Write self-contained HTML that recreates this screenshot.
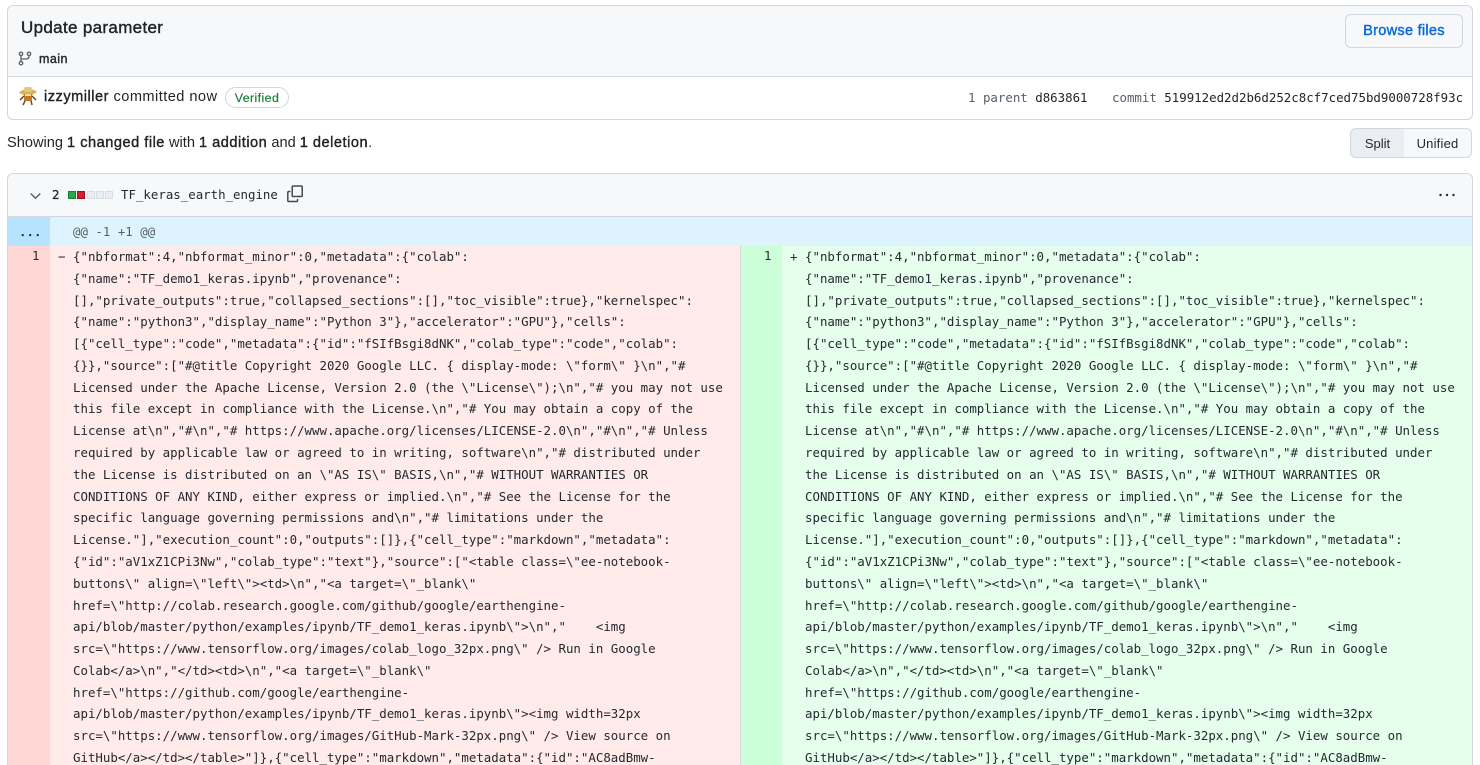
<!DOCTYPE html>
<html><head><meta charset="utf-8"><style>
html,body{margin:0;padding:0;background:#fff;width:1480px;height:765px;overflow:hidden}
body{position:relative;font-family:"Liberation Sans",sans-serif;color:#1f2328}
.a{position:absolute;white-space:pre}
.m{font-family:"DejaVu Sans Mono","Liberation Mono",monospace;font-size:12.42px}
pre{margin:0;position:absolute;font-family:"DejaVu Sans Mono","Liberation Mono",monospace;font-size:12.42px;line-height:21.78px;color:#24292f}
.s{font-weight:400;-webkit-text-stroke:.4px currentColor}
b{font-weight:400;-webkit-text-stroke:.4px currentColor;letter-spacing:.5px}
</style></head><body>
<div class="a" style="left:7px;top:5px;width:1464px;height:113px;border:1px solid #d0d7de;border-radius:6px"></div>
<div class="a" style="left:8px;top:6px;width:1464px;height:70px;background:#f6f8fa;border-bottom:1px solid #d5dbe2;border-radius:6px 6px 0 0"></div>
<div class="a s" style="left:21px;top:18px;font-size:17px;line-height:20px;letter-spacing:.33px;color:#1f2328">Update parameter</div>
<svg class="a" style="left:18px;top:51px" width="14" height="15" viewBox="0 0 14 15" fill="none" stroke="#57606a" stroke-width="1.3"><circle cx="3" cy="2.8" r="1.7"/><circle cx="3" cy="12.2" r="1.7"/><circle cx="11" cy="2.8" r="1.7"/><path d="M3 4.5V10.5M11 4.5V5.5C11 7.5 9.5 8 7.5 8H3"/></svg>
<div class="a s" style="left:39px;top:51px;font-size:12.5px;line-height:16px;letter-spacing:.45px;color:#24292f">main</div>
<div class="a s" style="left:1345px;top:14px;width:116px;height:32px;border:1px solid #d0d7de;border-radius:6px;background:#f6f8fa;text-align:center;line-height:32px;font-size:14.6px;letter-spacing:.25px;color:#0969da">Browse files</div>

<svg class="a" style="left:18px;top:85px" width="20" height="21" viewBox="0 0 20 21"><path d="M1 8C4 3 15 3 19 7L14 10H6Z" fill="#dcb050"/><rect x="6" y="2" width="8" height="5" rx="2" fill="#e3c77e"/><path d="M6 9H14L14 16H6Z" fill="#c67a22"/><path d="M7 9H13V11H7Z" fill="#f0dca8"/><path d="M6 11L2 15M14 11L18 15M7 16L5 20M13 16L14 20" stroke="#6b4a22" stroke-width="1.5" fill="none"/></svg>
<div class="a" style="left:44px;top:88px;font-size:14.6px;line-height:18px;letter-spacing:.45px;color:#1f2328"><b>izzymiller</b> committed now</div>
<div class="a s" style="left:225px;top:87px;width:62px;height:19px;border:1px solid #d0d7de;border-radius:11px;text-align:center;font-size:12.4px;line-height:20px;letter-spacing:.4px;color:#1a7f37;-webkit-text-stroke:.2px #1a7f37">Verified</div>
<div class="a m" style="left:968px;top:90px;line-height:16px;color:#57606a">1 parent <span style="color:#1f2328">d863861</span></div>
<div class="a m" style="left:1112px;top:90px;line-height:16px;color:#57606a">commit <span style="color:#1f2328">519912ed2d2b6d252c8cf7ced75bd9000728f93c</span></div>

<div class="a" style="left:7px;top:134px;font-size:14.6px;line-height:18px;color:#1f2328">Showing <b>1 changed file</b> with <b>1 addition</b> and <b>1 deletion</b>.</div>
<div class="a" style="left:1350px;top:128px;width:53px;height:28px;border:1px solid #d0d7de;border-radius:6px 0 0 6px;background:#eaeef2;text-align:center;font-size:13px;line-height:29px;color:#24292f">Split</div>
<div class="a" style="left:1404px;top:128px;width:67px;height:28px;border:1px solid #d0d7de;border-left:none;border-radius:0 6px 6px 0;background:#f6f8fa;text-align:center;font-size:13px;line-height:29px;letter-spacing:.2px;color:#24292f">Unified</div>

<div class="a" style="left:7px;top:173px;width:1464px;height:620px;border:1px solid #d0d7de;border-radius:6px"></div>
<div class="a" style="left:8px;top:174px;width:1464px;height:42px;background:#f6f8fa;border-bottom:1px solid #d0d7de;border-radius:6px 6px 0 0"></div>
<svg class="a" style="left:30px;top:192px" width="11" height="8" viewBox="0 0 11 8" fill="none" stroke="#57606a" stroke-width="1.4"><path d="M.7 1.5L5.5 6.3L10.3 1.5"/></svg>
<div class="a m" style="left:52px;top:187px;line-height:16px;color:#24292f;-webkit-text-stroke:.3px #24292f">2</div>
<div class="a" style="left:68px;top:191px;width:6px;height:6px;background:#2da44e;border:1px solid #1a7f37"></div>
<div class="a" style="left:77px;top:191px;width:6px;height:6px;background:#cf222e;border:1px solid #a40e26"></div>
<div class="a" style="left:87px;top:191px;width:6px;height:6px;background:#eaeef2;border:1px solid #d8dee4"></div>
<div class="a" style="left:96px;top:191px;width:6px;height:6px;background:#eaeef2;border:1px solid #d8dee4"></div>
<div class="a" style="left:105px;top:191px;width:6px;height:6px;background:#eaeef2;border:1px solid #d8dee4"></div>
<div class="a m" style="left:121px;top:187px;line-height:16px;color:#24292f">TF_keras_earth_engine</div>
<svg class="a" style="left:287px;top:185px" width="16" height="18" viewBox="0 0 16 18" fill="none" stroke="#424a53" stroke-width="1.5"><rect x="5.2" y="1" width="10" height="10.5" rx="1"/><path d="M3.5 6.5H1.8C1.2 6.5 .8 6.9 .8 7.5V15.5C.8 16.1 1.2 16.5 1.8 16.5H9.5C10.1 16.5 10.5 16.1 10.5 15.5V14"/></svg>
<svg class="a" style="left:1439px;top:191px" width="16" height="8" viewBox="0 0 16 8" fill="#24292f"><circle cx="1.5" cy="4" r="1.2"/><circle cx="8" cy="4" r="1.2"/><circle cx="14.5" cy="4" r="1.2"/></svg>

<div class="a" style="left:8px;top:217px;width:42px;height:29px;background:#b6e3ff"></div>
<div class="a" style="left:50px;top:217px;width:1422px;height:29px;background:#ddf4ff"></div>
<div class="a m" style="left:19px;top:224px;line-height:16px;color:#24292f;-webkit-text-stroke:.3px #24292f">...</div>
<div class="a m" style="left:73px;top:224px;line-height:16px;color:#57606a">@@ -1 +1 @@</div>

<div class="a" style="left:8px;top:246px;width:42px;height:530px;background:#ffd7d5"></div>
<div class="a" style="left:50px;top:246px;width:690px;height:530px;background:#ffebe9"></div>
<div class="a" style="left:740px;top:246px;width:1px;height:530px;background:#d0d7de"></div>
<div class="a" style="left:741px;top:246px;width:41px;height:530px;background:#ccffd8"></div>
<div class="a" style="left:782px;top:246px;width:690px;height:530px;background:#e6ffec"></div>

<div class="a m" style="left:32px;top:248px;line-height:16px;color:#24292f">1</div>
<div class="a m" style="left:764px;top:248px;line-height:16px;color:#24292f">1</div>
<div class="a m" style="left:58px;top:249px;line-height:16px;color:#24292f">−</div>
<div class="a m" style="left:790px;top:249px;line-height:16px;color:#24292f">+</div>

<pre style="left:73px;top:246px">{"nbformat":4,"nbformat_minor":0,"metadata":{"colab":
{"name":"TF_demo1_keras.ipynb","provenance":
[],"private_outputs":true,"collapsed_sections":[],"toc_visible":true},"kernelspec":
{"name":"python3","display_name":"Python 3"},"accelerator":"GPU"},"cells":
[{"cell_type":"code","metadata":{"id":"fSIfBsgi8dNK","colab_type":"code","colab":
{}},"source":["#@title Copyright 2020 Google LLC. { display-mode: \"form\" }\n","#
Licensed under the Apache License, Version 2.0 (the \"License\");\n","# you may not use
this file except in compliance with the License.\n","# You may obtain a copy of the
License at\n","#\n","# https://www.apache.org/licenses/LICENSE-2.0\n","#\n","# Unless
required by applicable law or agreed to in writing, software\n","# distributed under
the License is distributed on an \"AS IS\" BASIS,\n","# WITHOUT WARRANTIES OR
CONDITIONS OF ANY KIND, either express or implied.\n","# See the License for the
specific language governing permissions and\n","# limitations under the
License."],"execution_count":0,"outputs":[]},{"cell_type":"markdown","metadata":
{"id":"aV1xZ1CPi3Nw","colab_type":"text"},"source":["&lt;table class=\"ee-notebook-
buttons\" align=\"left\"&gt;&lt;td&gt;\n","&lt;a target=\"_blank\"
href=\"http://colab.research.google.com/github/google/earthengine-
api/blob/master/python/examples/ipynb/TF_demo1_keras.ipynb\"&gt;\n","    &lt;img
src=\"https://www.tensorflow.org/images/colab_logo_32px.png\" /&gt; Run in Google
Colab&lt;/a&gt;\n","&lt;/td&gt;&lt;td&gt;\n","&lt;a target=\"_blank\"
href=\"https://github.com/google/earthengine-
api/blob/master/python/examples/ipynb/TF_demo1_keras.ipynb\"&gt;&lt;img width=32px
src=\"https://www.tensorflow.org/images/GitHub-Mark-32px.png\" /&gt; View source on
GitHub&lt;/a&gt;&lt;/td&gt;&lt;/table&gt;"]},{"cell_type":"markdown","metadata":{"id":"AC8adBmw-</pre>
<pre style="left:805px;top:246px">{"nbformat":4,"nbformat_minor":0,"metadata":{"colab":
{"name":"TF_demo1_keras.ipynb","provenance":
[],"private_outputs":true,"collapsed_sections":[],"toc_visible":true},"kernelspec":
{"name":"python3","display_name":"Python 3"},"accelerator":"GPU"},"cells":
[{"cell_type":"code","metadata":{"id":"fSIfBsgi8dNK","colab_type":"code","colab":
{}},"source":["#@title Copyright 2020 Google LLC. { display-mode: \"form\" }\n","#
Licensed under the Apache License, Version 2.0 (the \"License\");\n","# you may not use
this file except in compliance with the License.\n","# You may obtain a copy of the
License at\n","#\n","# https://www.apache.org/licenses/LICENSE-2.0\n","#\n","# Unless
required by applicable law or agreed to in writing, software\n","# distributed under
the License is distributed on an \"AS IS\" BASIS,\n","# WITHOUT WARRANTIES OR
CONDITIONS OF ANY KIND, either express or implied.\n","# See the License for the
specific language governing permissions and\n","# limitations under the
License."],"execution_count":0,"outputs":[]},{"cell_type":"markdown","metadata":
{"id":"aV1xZ1CPi3Nw","colab_type":"text"},"source":["&lt;table class=\"ee-notebook-
buttons\" align=\"left\"&gt;&lt;td&gt;\n","&lt;a target=\"_blank\"
href=\"http://colab.research.google.com/github/google/earthengine-
api/blob/master/python/examples/ipynb/TF_demo1_keras.ipynb\"&gt;\n","    &lt;img
src=\"https://www.tensorflow.org/images/colab_logo_32px.png\" /&gt; Run in Google
Colab&lt;/a&gt;\n","&lt;/td&gt;&lt;td&gt;\n","&lt;a target=\"_blank\"
href=\"https://github.com/google/earthengine-
api/blob/master/python/examples/ipynb/TF_demo1_keras.ipynb\"&gt;&lt;img width=32px
src=\"https://www.tensorflow.org/images/GitHub-Mark-32px.png\" /&gt; View source on
GitHub&lt;/a&gt;&lt;/td&gt;&lt;/table&gt;"]},{"cell_type":"markdown","metadata":{"id":"AC8adBmw-</pre>
</body></html>
